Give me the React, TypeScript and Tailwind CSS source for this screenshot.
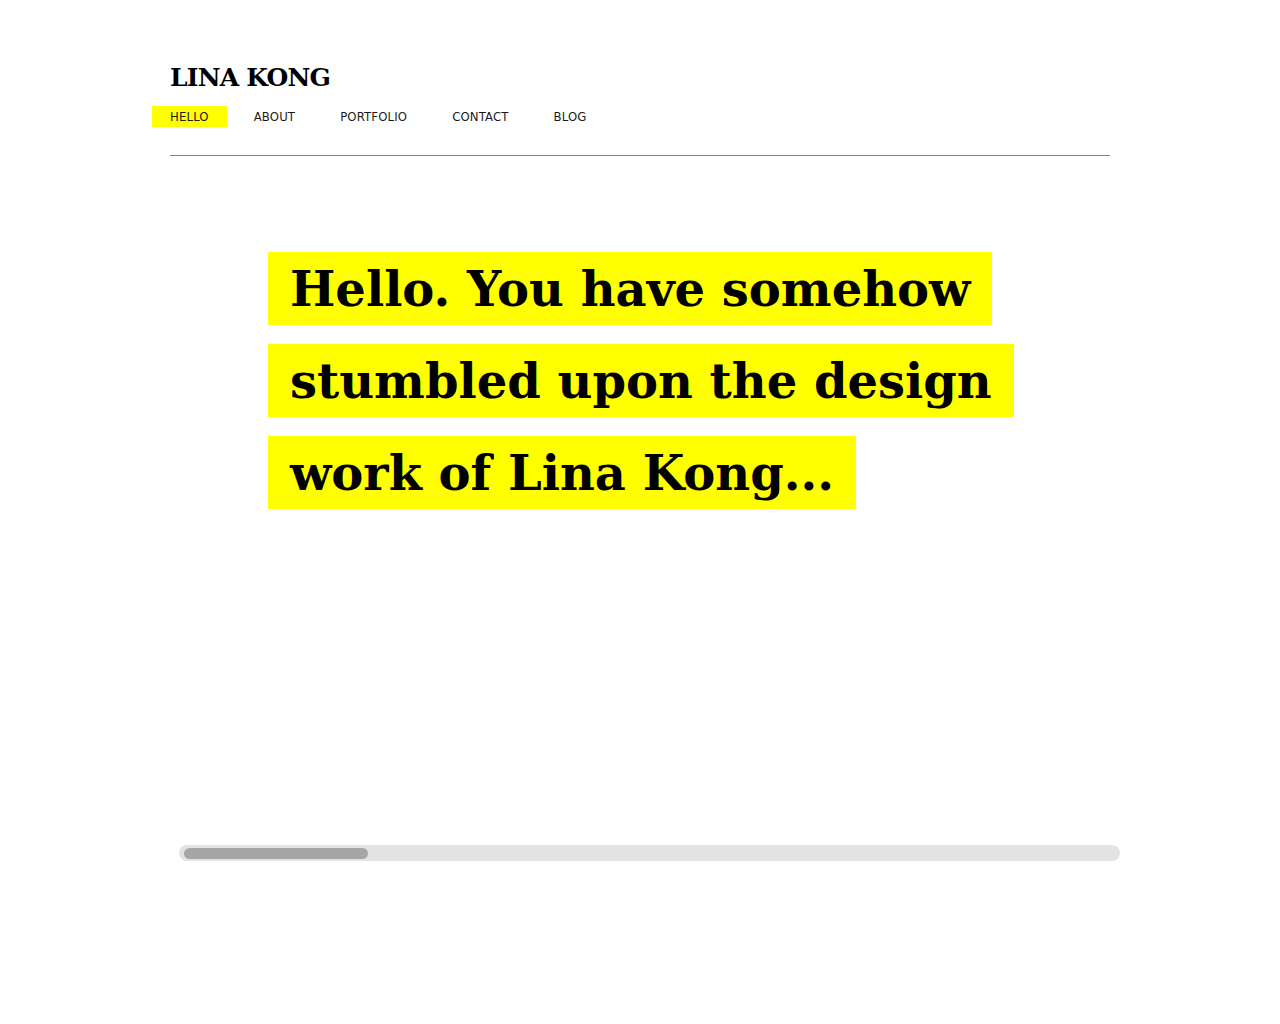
const navItems = ['HELLO', 'ABOUT', 'PORTFOLIO', 'CONTACT', 'BLOG'];

const lines = [
  'Hello. You have somehow',
  'stumbled upon the design',
  'work of Lina Kong...',
];

export default function App() {
  return (
    <div className="min-h-[1024px] w-full bg-white">
      <div className="mx-auto w-[940px] pt-[61px]">
        {/* Header */}
        <h1 className="font-['DejaVu_Serif',serif] text-[25px] font-bold leading-[34px] tracking-[-0.8px] text-black">
          LINA KONG
        </h1>

        <nav className="-ml-[18px] mt-[11px] flex items-center gap-[9px]">
          {navItems.map((item, i) => (
            <a
              key={item}
              className={`h-[21px] px-[18px] font-['DejaVu_Sans_Condensed','Liberation_Sans_Narrow',sans-serif] text-[13px] leading-[22px] tracking-[0.15px] text-[#1a1a1a] ${
                i === 0 ? 'bg-[#ffff00]' : ''
              }`}
            >
              {item}
            </a>
          ))}
        </nav>

        <div className="mt-[28px] h-px bg-[#808080]" />

        {/* Intro */}
        <div className="ml-[98px] mt-[96px] flex flex-col items-start gap-[19px]">
          {lines.map((line) => (
            <span
              key={line}
              className="flex h-[73px] items-center bg-[#ffff00] px-[22px] font-['DejaVu_Serif',serif] text-[48px] font-bold text-black"
            >
              {line}
            </span>
          ))}
        </div>

        {/* Scroller */}
        <div className="ml-[9px] mt-[336px] flex h-[16px] w-[941px] items-center rounded-full bg-[#e3e3e3] px-[5px]">
          <div className="h-[11px] w-[184px] rounded-full bg-[#a6a6a6]" />
        </div>
      </div>
    </div>
  );
}
